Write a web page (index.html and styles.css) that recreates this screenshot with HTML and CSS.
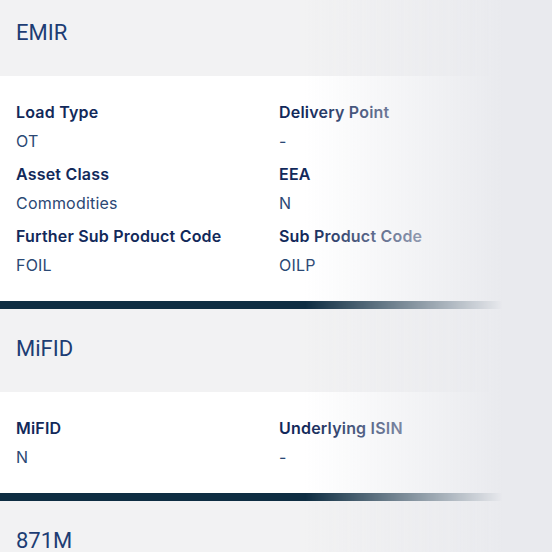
FILE: index.html
```html
<!DOCTYPE html>
<html lang="en">
<head>
<meta charset="utf-8">
<title>Details</title>
<link rel="stylesheet" href="styles.css">
</head>
<body>
<div class="page">
  <section class="group">
    <h2 class="group-head">EMIR</h2>
    <div class="group-body">
      <div class="field"><div class="label">Load Type</div><div class="value">OT</div></div>
      <div class="field"><div class="label">Delivery Point</div><div class="value">-</div></div>
      <div class="field"><div class="label">Asset Class</div><div class="value">Commodities</div></div>
      <div class="field"><div class="label">EEA</div><div class="value">N</div></div>
      <div class="field"><div class="label">Further Sub Product Code</div><div class="value">FOIL</div></div>
      <div class="field"><div class="label">Sub Product Code</div><div class="value">OILP</div></div>
    </div>
    <div class="bar"></div>
  </section>
  <section class="group">
    <h2 class="group-head">MiFID</h2>
    <div class="group-body">
      <div class="field"><div class="label">MiFID</div><div class="value">N</div></div>
      <div class="field"><div class="label">Underlying ISIN</div><div class="value">-</div></div>
    </div>
    <div class="bar"></div>
  </section>
  <section class="group">
    <h2 class="group-head">871M</h2>
  </section>
</div>
<div class="fade"></div>
</body>
</html>
```
FILE: styles.css
```css
html, body {
  margin: 0;
  padding: 0;
  background: #ffffff;
  overflow: hidden;
  height: 552px;
}

.page {
  margin-top: -7px;
}

.group-head {
  margin: 0;
  box-sizing: border-box;
  height: 83px;
  padding: 29px 16px 0;
  background: #f2f2f3;
  font-family: Roboto, "Liberation Sans", sans-serif;
  font-weight: 400;
  font-size: 22px;
  line-height: 22px;
  color: #1d3d74;
}

.group-body {
  display: grid;
  grid-template-columns: 1fr 1fr;
  column-gap: 6px;
  row-gap: 9px;
  padding: 24px 16px;
  background: #ffffff;
  font-family: Inter, "Liberation Sans", sans-serif;
  font-size: 16px;
  line-height: 24px;
  letter-spacing: 0.2px;
}

.field {
  display: flex;
  flex-direction: column;
  gap: 5px;
}

.label {
  font-weight: 600;
  color: #12295a;
}

.value {
  font-weight: 400;
  color: #2b4874;
}

.bar {
  height: 8px;
  background: #0e2d42;
}

.fade {
  position: fixed;
  top: 0;
  right: 0;
  bottom: 0;
  width: 247px;
  pointer-events: none;
  background: linear-gradient(to right, rgba(233, 234, 238, 0) 0%, #e9eaee 80%, #e9eaee 100%);
}
```
